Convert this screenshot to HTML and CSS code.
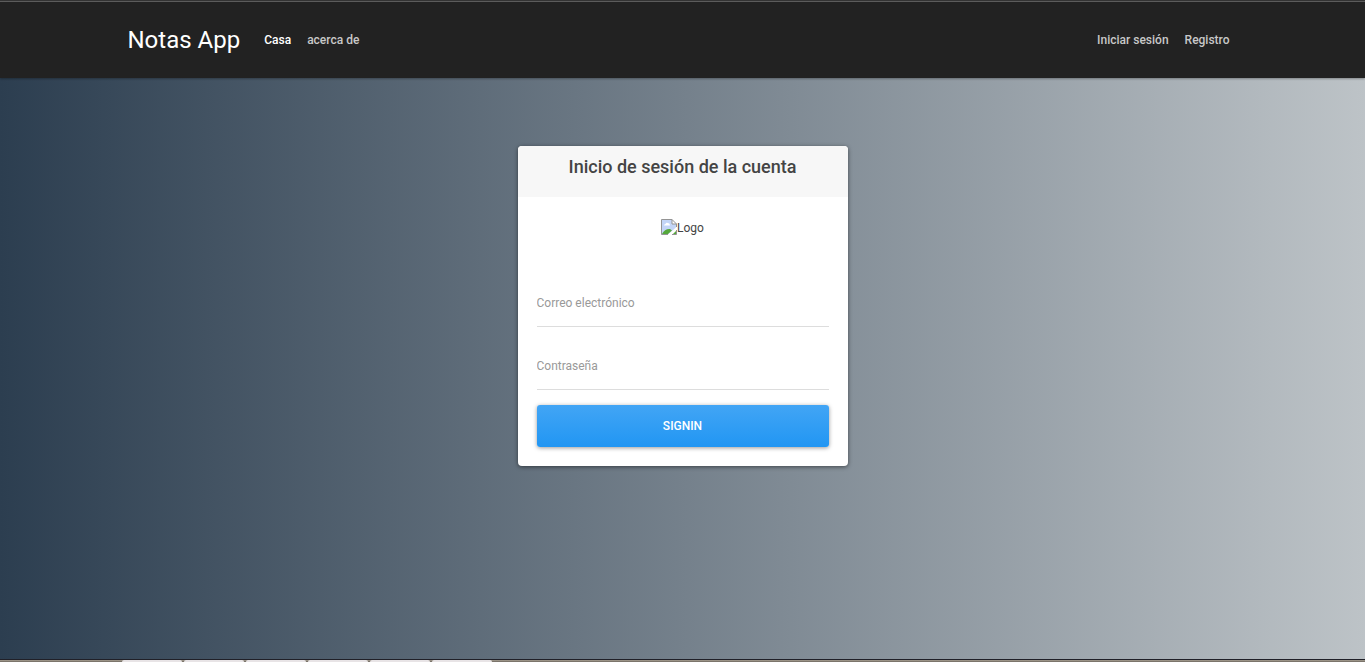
FILE: index.html
```html
<!DOCTYPE html>
<html lang="es">
<head>
<meta charset="utf-8">
<meta name="viewport" content="width=device-width, initial-scale=1">
<title>Notas App</title>
<link rel="stylesheet" href="styles.css">
</head>
<body>
<header class="navbar">
  <nav class="container">
    <a class="brand" href="#">Notas App</a>
    <a class="nav-link active" href="#">Casa</a>
    <a class="nav-link" href="#">acerca de</a>
    <a class="nav-link push" href="#">Iniciar sesión</a>
    <a class="nav-link" href="#">Registro</a>
  </nav>
</header>
<main class="page">
  <section class="card">
    <h1 class="card-header">Inicio de sesión de la cuenta</h1>
    <div class="card-body">
      <div class="logo">
        <svg width="16" height="16" viewBox="0 0 16 16" aria-hidden="true">
          <path d="M.5 .5H11L15.500 5V8L7 15.500H.5Z" fill="#c3d5f7"/>
          <path d="M3 6.500Q3 5 4.500 5Q5 3 7 4Q9 4 9 6.500Z" fill="#fff"/>
          <path d="M1 15Q4 9.500 9 10L11 11.500L7 15Z" fill="#55a83b"/>
          <path d="M12 15L15 12V15Z" fill="#55a83b"/>
          <path d="M11 .5V5H15.500Z" fill="#fff"/>
          <path d="M7 15.500H.5V.5H11L15.500 5V8M11 .5V5H15.500M11 15.500H15.500V11" fill="none" stroke="#949494"/>
          <path d="M7 16L16 8V10L10 16Z" fill="#fff"/>
        </svg>
        <span>Logo</span>
      </div>
      <form>
        <input class="field" type="email" placeholder="Correo electrónico" aria-label="Correo electrónico">
        <input class="field" type="password" placeholder="Contraseña" aria-label="Contraseña">
        <button class="submit" type="button">SIGNIN</button>
      </form>
    </div>
  </section>
</main>
<footer class="taskbar">
  <span class="task"></span><span class="task"></span><span class="task"></span><span class="task"></span><span class="task"></span><span class="task"></span>
</footer>
</body>
</html>
```
FILE: styles.css
```css
* { box-sizing: border-box; }

body {
  margin: 0;
  min-height: 100vh;
  display: flex;
  flex-direction: column;
  font-family: Roboto, sans-serif;
  font-size: 13px;
  line-height: 20px;
  color: #444;
  background: linear-gradient(to right, #2c3e50, #bdc3c7);
}

.navbar {
  padding: 19px 0 18px;
  border-top: 1px solid #333;
  background: #222;
  box-shadow: inset 0 1px #5c5c5c, 0 1px 2px rgba(0, 0, 0, .3);
}

.container {
  display: flex;
  align-items: center;
  max-width: 1140px;
  margin: 0 auto;
  padding: 0 15px;
}

.brand {
  margin-right: 16px;
  font-size: 24px;
  line-height: 40px;
  color: #fff;
  text-decoration: none;
}

.nav-link {
  padding: 0 8px;
  font-size: 12px;
  font-weight: 500;
  color: #c8c8c8;
  text-decoration: none;
}

.nav-link.active { color: #fff; }

.push { margin-left: auto; }

.page {
  flex: 1;
  padding: 68px 16px;
}

.card {
  max-width: 330px;
  margin: 0 auto;
  border-radius: 4px;
  overflow: hidden;
  background: #fff;
  box-shadow: 0 1px 4px rgba(0, 0, 0, .5);
}

.card-header {
  margin: 0;
  padding: 10px 19px 19px;
  font-size: 18px;
  font-weight: 500;
  line-height: 22px;
  text-align: center;
  background: #f7f7f7;
}

.card-body { padding: 19px; }

.logo {
  display: flex;
  justify-content: center;
  align-items: flex-start;
  padding: 3px 0;
  margin-bottom: 39px;
  font-size: 12px;
  line-height: 18px;
}

.field {
  display: block;
  width: 100%;
  height: 48px;
  margin-bottom: 15px;
  padding: 0;
  border: 0;
  border-bottom: 1px solid #ddd;
  outline: 0;
  font: 12px/20px Roboto, sans-serif;
  color: #444;
  background: transparent;
}

.field::placeholder { color: #999; opacity: 1; }

.submit {
  display: block;
  width: 100%;
  height: 42px;
  border: 0;
  border-radius: 3px;
  font: 500 12px/20px Roboto, sans-serif;
  color: #fff;
  background: linear-gradient(#42a5f5, #2196f3);
  box-shadow: 0 1px 4px rgba(0, 0, 0, .4);
}

.taskbar {
  display: flex;
  gap: 2px;
  height: 3px;
  padding-left: 122px;
  border-top: 1px solid #202028;
  background: linear-gradient(#aaa294, #6c665e);
}

.task {
  width: 60px;
  border-radius: 2px 2px 0 0;
  background: #e8e4e6;
}
```
